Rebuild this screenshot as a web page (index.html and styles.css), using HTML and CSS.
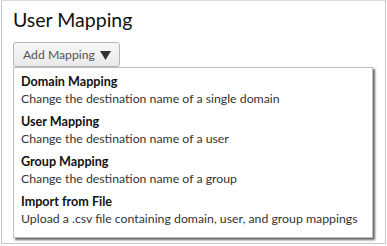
FILE: index.html
```html
<!DOCTYPE html>
<html>
<head>
<meta charset="utf-8">
<link rel="stylesheet" href="styles.css">
</head>
<body>
<div class="frame">
  <h1 class="title">User Mapping</h1>
  <div class="dropdown">
    <button class="btn"><span>Add Mapping</span><svg class="caret" width="11" height="9" viewBox="0 0 11 9"><polygon points="0,0 11,0 5.5,9" fill="#333"/></svg></button>
    <ul class="menu">
      <li class="item"><div class="name">Domain Mapping</div><div class="desc">Change the destination name of a single domain</div></li>
      <li class="item"><div class="name">User Mapping</div><div class="desc">Change the destination name of a user</div></li>
      <li class="item"><div class="name">Group Mapping</div><div class="desc">Change the destination name of a group</div></li>
      <li class="item"><div class="name">Import from File</div><div class="desc">Upload a .csv file containing domain, user, and group mappings</div></li>
    </ul>
  </div>
</div>
</body>
</html>
```
FILE: styles.css
```css
html, body { margin: 0; padding: 0; background: #fff; }
body { font-family: Lato, "Open Sans", sans-serif; }
.frame {
  margin-left: 1px;
  width: 385px;
  height: 244px;
  border: 1px solid #c8c8c8;
  border-top: 1px solid #d8d8d8;
  padding: 0 0 0 11px;
  box-sizing: border-box;
}
.title {
  margin: 0;
  padding-top: 8px;
  font-size: 19.5px;
  font-weight: 400;
  color: #111;
  line-height: 22px;
}
.dropdown { margin-top: 11px; }
.btn {
  display: flex;
  align-items: center;
  gap: 5px;
  white-space: nowrap;
  height: 25px;
  padding: 0 8px 0 9px;
  border: 1px solid #b5b5b5;
  border-radius: 3px;
  background: linear-gradient(#f7f7f7, #e9e9e9);
  color: #555;
  font-family: Lato, sans-serif;
  font-size: 12.2px;
}
.caret { display: block; margin-top: 1px; }
.menu {
  list-style: none;
  margin: 0;
  padding: 6px 0 5px 7px;
  width: 360px;
  box-sizing: border-box;
  border: 1px solid #bdbdbd;
  background: #fff;
  box-shadow: 2px 2px 2px #666;
}
.item { height: 40px; }
.item:last-child { height: 38px; }
.name { font-size: 12.6px; font-weight: 700; color: #111; line-height: 16px; }
.desc { font-size: 12.3px; color: #333; line-height: 17px; }
```
